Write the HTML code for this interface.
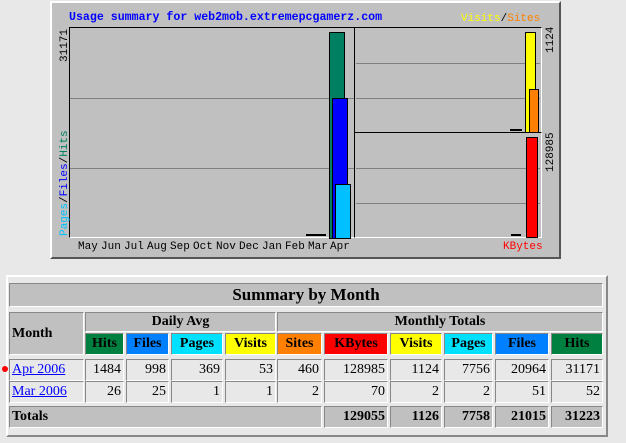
<!DOCTYPE html><html><head><style>
body{margin:0;width:626px;height:443px;background:#e8e8e8;position:relative;overflow:hidden;font-family:"Liberation Serif",serif}
.a{position:absolute;box-sizing:border-box}
.m{font-family:"Liberation Mono",monospace;font-weight:bold;font-size:11px}
.c{font-weight:bold;font-size:14px;display:flex;align-items:center;justify-content:center;border:1px solid;border-color:#888 #fff #fff #888}
.g{background:#c0c0c0}
.d{font-size:14px;display:flex;align-items:center;justify-content:flex-end;padding-right:2px;background:#e8e8e8;border:1px solid;border-color:#888 #fff #fff #888}
.bar{position:absolute;border:1px solid #000}
.hl{position:absolute;height:1px;background:#808080}
.rot{position:absolute;transform:rotate(-90deg);transform-origin:left top;white-space:nowrap}
.mo{position:absolute;top:241px;font-family:"Liberation Mono",monospace;font-size:11px}
</style></head><body>
<div class="a" style="left:50px;top:1px;width:511px;height:258px;background:#c0c0c0;border:2px solid;border-color:#fff #555 #555 #fff"></div>
<div class="a m" style="left:69px;top:11px;color:#0000ff;font-size:11.6px">Usage summary for web2mob.extremepcgamerz.com</div>
<div class="a m" style="left:461px;top:13px;font-size:11px;font-weight:normal"><span style="color:#ff0">Visits</span>/<span style="color:#ff8000">Sites</span></div>
<div class="a" style="left:69px;top:27px;width:286px;height:211px;border:1px solid;border-color:#000 #fff #fff #000"></div>
<div class="a" style="left:354px;top:27px;width:188px;height:106px;border:1px solid;border-color:#000 #fff #fff #000"></div>
<div class="a" style="left:354px;top:132px;width:188px;height:106px;border:1px solid;border-color:#000 #fff #fff #000"></div>
<div class="hl" style="left:70px;top:98px;width:284px"></div>
<div class="hl" style="left:70px;top:168px;width:284px"></div>
<div class="hl" style="left:356px;top:63px;width:184px"></div>
<div class="hl" style="left:356px;top:98px;width:184px"></div>
<div class="hl" style="left:356px;top:168px;width:184px"></div>
<div class="hl" style="left:356px;top:203px;width:184px"></div>
<div class="bar" style="left:329px;top:32px;width:14px;height:205px;background:#008060"></div>
<div class="bar" style="left:332px;top:98px;width:14px;height:139px;background:#0000ff"></div>
<div class="bar" style="left:335px;top:184px;width:14px;height:53px;background:#00c0ff"></div>
<div class="a" style="left:306px;top:234px;width:20px;height:2px;background:#000"></div>
<div class="bar" style="left:525px;top:32px;width:9px;height:99px;background:#ff0"></div>
<div class="bar" style="left:529px;top:89px;width:8px;height:42px;background:#ff8000"></div>
<div class="a" style="left:510px;top:129px;width:12px;height:2px;background:#000"></div>
<div class="bar" style="left:526px;top:137px;width:10px;height:99px;background:#f00"></div>
<div class="a" style="left:511px;top:234px;width:10px;height:2px;background:#000"></div>
<div class="rot m" style="left:59px;top:62px;font-weight:normal;font-size:11px">31171</div>
<div class="rot m" style="left:59px;top:236px;font-weight:normal;font-size:11px"><span style="color:#00c0ff">Pages</span>/<span style="color:#0000ff">Files</span>/<span style="color:#008060">Hits</span></div>
<div class="rot m" style="left:545px;top:53px;font-weight:normal">1124</div>
<div class="rot m" style="left:545px;top:172px;font-weight:normal">128985</div>
<div class="mo" style="left:78px">May</div><div class="mo" style="left:101px">Jun</div><div class="mo" style="left:124px">Jul</div><div class="mo" style="left:147px">Aug</div><div class="mo" style="left:170px">Sep</div><div class="mo" style="left:193px">Oct</div><div class="mo" style="left:216px">Nov</div><div class="mo" style="left:239px">Dec</div><div class="mo" style="left:262px">Jan</div><div class="mo" style="left:285px">Feb</div><div class="mo" style="left:308px">Mar</div><div class="mo" style="left:330px">Apr</div>
<div class="a m" style="left:503px;top:241px;font-weight:normal;color:#f00">KBytes</div>

<div class="a" style="left:6px;top:275px;width:602px;height:162px;border:2px solid;border-color:#fff #888 #888 #fff"></div>
<div class="a c g" style="left:9px;top:283px;width:594px;height:24px;font-size:17px">Summary by Month</div>
<div class="a c g" style="left:9px;top:312px;width:75px;height:43px;justify-content:flex-start;padding-left:2px">Month</div>
<div class="a c g" style="left:85px;top:312px;width:191px;height:20px">Daily Avg</div>
<div class="a c g" style="left:277px;top:312px;width:326px;height:20px">Monthly Totals</div>
<div class="a c" style="left:85px;top:333px;width:39px;height:22px;background:#008040">Hits</div>
<div class="a c" style="left:126px;top:333px;width:43px;height:22px;background:#0080ff">Files</div>
<div class="a c" style="left:171px;top:333px;width:52px;height:22px;background:#00e0ff">Pages</div>
<div class="a c" style="left:225px;top:333px;width:51px;height:22px;background:#ff0">Visits</div>
<div class="a c" style="left:277px;top:333px;width:45px;height:22px;background:#ff8000">Sites</div>
<div class="a c" style="left:324px;top:333px;width:64px;height:22px;background:#f00">KBytes</div>
<div class="a c" style="left:390px;top:333px;width:52px;height:22px;background:#ff0">Visits</div>
<div class="a c" style="left:444px;top:333px;width:49px;height:22px;background:#00e0ff">Pages</div>
<div class="a c" style="left:495px;top:333px;width:54px;height:22px;background:#0080ff">Files</div>
<div class="a c" style="left:551px;top:333px;width:52px;height:22px;background:#008040">Hits</div>
<div class="a" style="left:2px;top:366px;width:6px;height:6px;border-radius:50%;background:#f00"></div>
<div class="a d" style="left:9px;top:359px;width:75px;height:22px;justify-content:flex-start;padding-left:2px"><a style="color:#00f;text-decoration:underline">Apr 2006</a></div>
<div class="a d" style="left:85px;top:359px;width:39px;height:22px">1484</div>
<div class="a d" style="left:126px;top:359px;width:43px;height:22px">998</div>
<div class="a d" style="left:171px;top:359px;width:52px;height:22px">369</div>
<div class="a d" style="left:225px;top:359px;width:51px;height:22px">53</div>
<div class="a d" style="left:277px;top:359px;width:45px;height:22px">460</div>
<div class="a d" style="left:324px;top:359px;width:64px;height:22px">128985</div>
<div class="a d" style="left:390px;top:359px;width:52px;height:22px">1124</div>
<div class="a d" style="left:444px;top:359px;width:49px;height:22px">7756</div>
<div class="a d" style="left:495px;top:359px;width:54px;height:22px">20964</div>
<div class="a d" style="left:551px;top:359px;width:52px;height:22px">31171</div>
<div class="a d" style="left:9px;top:381px;width:75px;height:22px;justify-content:flex-start;padding-left:2px"><a style="color:#00f;text-decoration:underline">Mar 2006</a></div>
<div class="a d" style="left:85px;top:381px;width:39px;height:22px">26</div>
<div class="a d" style="left:126px;top:381px;width:43px;height:22px">25</div>
<div class="a d" style="left:171px;top:381px;width:52px;height:22px">1</div>
<div class="a d" style="left:225px;top:381px;width:51px;height:22px">1</div>
<div class="a d" style="left:277px;top:381px;width:45px;height:22px">2</div>
<div class="a d" style="left:324px;top:381px;width:64px;height:22px">70</div>
<div class="a d" style="left:390px;top:381px;width:52px;height:22px">2</div>
<div class="a d" style="left:444px;top:381px;width:49px;height:22px">2</div>
<div class="a d" style="left:495px;top:381px;width:54px;height:22px">51</div>
<div class="a d" style="left:551px;top:381px;width:52px;height:22px">52</div>
<div class="a c g" style="left:9px;top:406px;width:313px;height:22px;justify-content:flex-start;padding-left:2px">Totals</div>
<div class="a c g" style="left:324px;top:406px;width:64px;height:22px;justify-content:flex-end;padding-right:2px">129055</div>
<div class="a c g" style="left:390px;top:406px;width:52px;height:22px;justify-content:flex-end;padding-right:2px">1126</div>
<div class="a c g" style="left:444px;top:406px;width:49px;height:22px;justify-content:flex-end;padding-right:2px">7758</div>
<div class="a c g" style="left:495px;top:406px;width:54px;height:22px;justify-content:flex-end;padding-right:2px">21015</div>
<div class="a c g" style="left:551px;top:406px;width:52px;height:22px;justify-content:flex-end;padding-right:2px">31223</div>
</body></html>
